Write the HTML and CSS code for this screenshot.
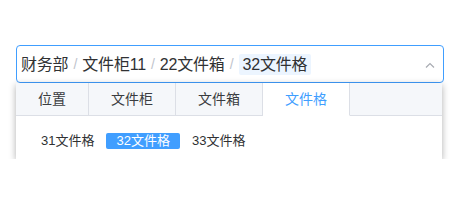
FILE: index.html
```html
<!DOCTYPE html>
<html lang="zh">
<head>
  <meta charset="UTF-8" />
  <title>位置选择</title>
  <link rel="stylesheet" href="styles.css">
</head>
<body>
  <div class="picker">
    <div class="picker-input">
      <div class="crumbs">
        <span class="crumb">财务部</span>
        <span class="sep">/</span>
        <span class="crumb">文件柜11</span>
        <span class="sep">/</span>
        <span class="crumb">22文件箱</span>
        <span class="sep">/</span>
        <span class="crumb current">32文件格</span>
      </div>
      <svg class="arrow" width="10" height="6" viewBox="0 0 10 6">
        <polyline points="1,5.5 5,1.5 9,5.5" fill="none" stroke="#a8abb2" stroke-width="1.2"/>
      </svg>
    </div>
    <div class="panel">
      <div class="tabs">
        <div class="tab">位置</div>
        <div class="tab">文件柜</div>
        <div class="tab">文件箱</div>
        <div class="tab active">文件格</div>
        <div class="tab-rest"></div>
      </div>
      <div class="options">
        <span class="option">31文件格</span>
        <span class="option selected">32文件格</span>
        <span class="option">33文件格</span>
      </div>
    </div>
  </div>
</body>
</html>
```

FILE: styles.css
```css
body {
  margin: 0;
  background: #fff;
  font-family: "Liberation Sans", "Noto Sans CJK SC", sans-serif;
}

.picker {
  width: 428px;
  margin: 45px 0 0 16px;
}

.picker-input {
  height: 36px;
  border: 1px solid #409eff;
  border-radius: 4px;
  display: flex;
  align-items: center;
  justify-content: space-between;
  padding: 0 8px 0 4px;
}

.crumbs {
  display: flex;
  align-items: center;
  font-size: 16px;
  color: #303133;
}

.crumb {
  line-height: 21px;
  letter-spacing: -0.2px;
}

.crumb.current {
  background: #ecf5ff;
  padding: 0 4px;
  border-radius: 2px;
}

.sep {
  color: #c0c4cc;
  margin: 0 5px;
  font-size: 14px;
}

.arrow {
  margin-top: 2px;
}

.panel {
  width: 426px;
  background: #fff;
  box-shadow: 0 2px 7px rgba(0, 0, 0, 0.32);
}

.tabs {
  display: flex;
  height: 33px;
  background: #f5f7fa;
}

.tab {
  padding: 0 22px;
  font-size: 14px;
  line-height: 32px;
  color: #3a3c40;
  border-right: 1px solid #dcdfe6;
  border-bottom: 1px solid #dcdfe6;
}

.tab.active {
  background: #fff;
  color: #409eff;
  border-bottom-color: #fff;
}

.tab-rest {
  flex: 1;
  border-bottom: 1px solid #dcdfe6;
}

.options {
  display: flex;
  gap: 2px;
  padding: 17px 15px 10px;
  font-size: 13px;
  color: #303133;
}

.option {
  padding: 0 10px;
  line-height: 16px;
  border-radius: 2px;
}

.option.selected {
  background: #409eff;
  color: #fff;
}
```
